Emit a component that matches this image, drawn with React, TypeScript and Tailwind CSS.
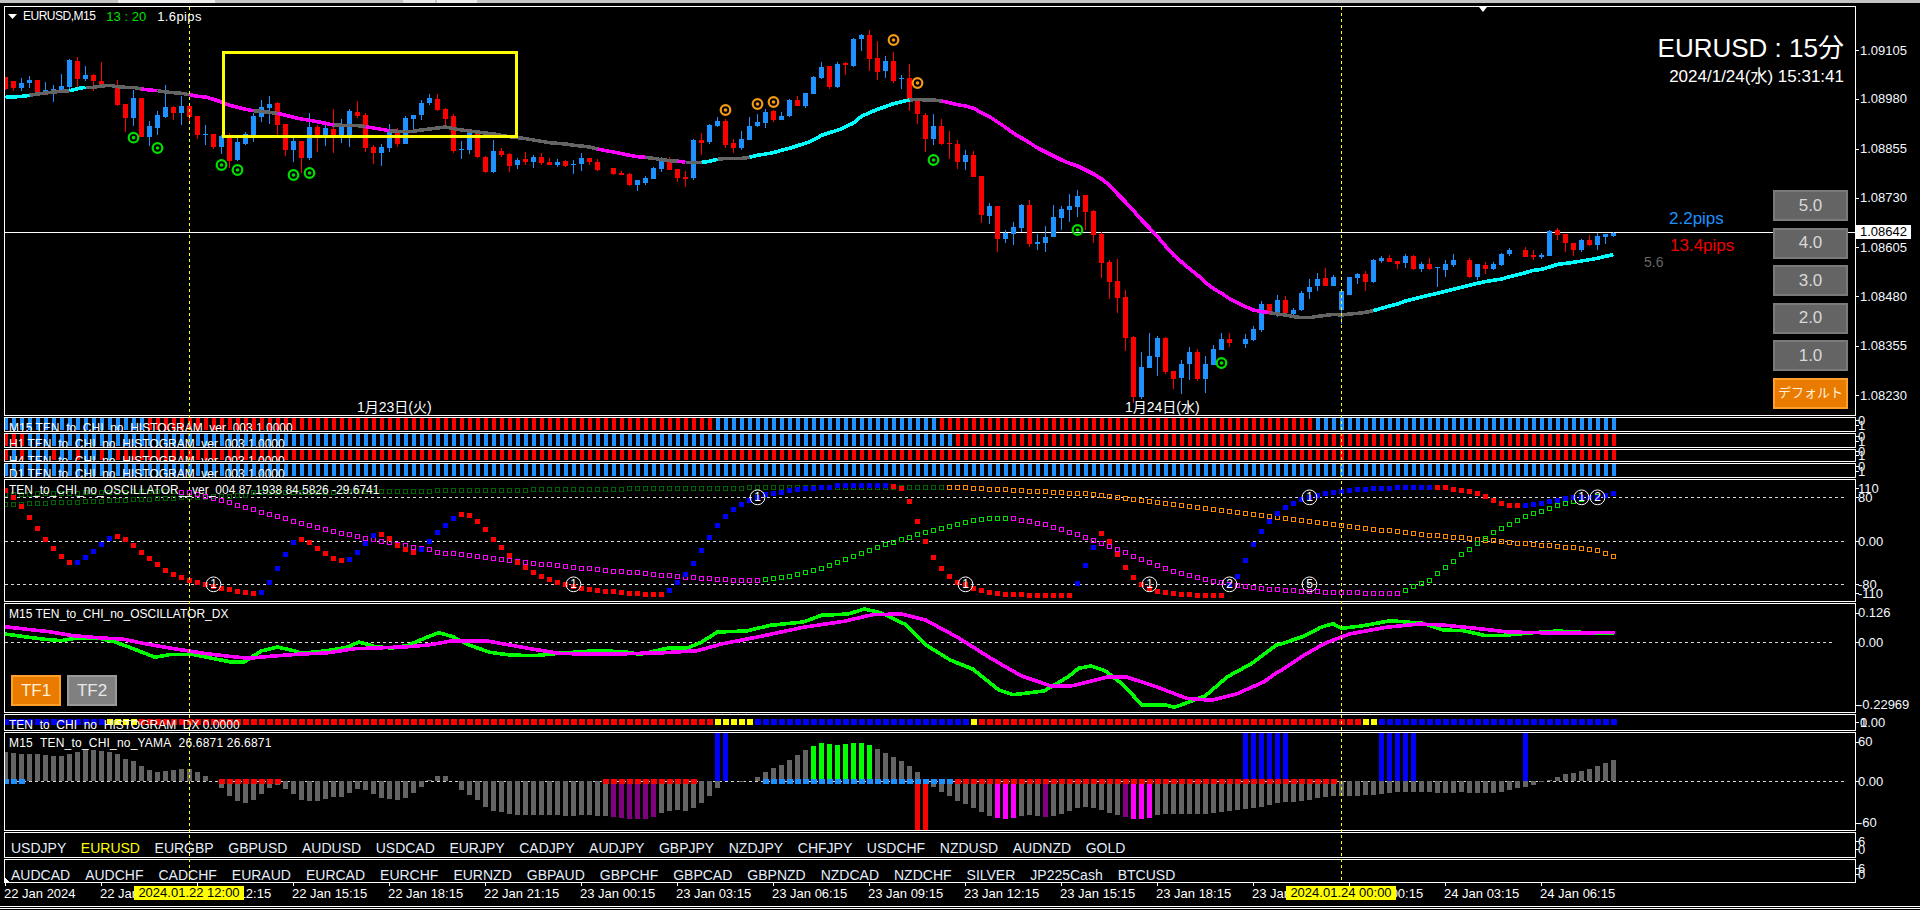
const RED = "#ff0000";
const DODGER = "#1e90ff";
const BLUE = "#0000ff";
const GRAY = "#646464";
const LIME = "#00ff00";
const MAGENTA = "#ff00ff";
const CYAN = "#00ffff";

const barX = (i: number) => 5.5 + 8 * i;

// candle rows: colour (0 red, 1 blue), wick top, body top, body bottom, wick bottom, all in 1/3 px
const candles: (number[] | null)[] = [
  [0,230,232,268,270],[0,243,243,263,272],[1,235,249,265,272],[1,228,240,249,265],[0,240,240,276,276],
  [1,247,270,280,285],[1,255,267,280,305],[1,222,258,272,278],[1,178,180,262,270],[0,172,183,238,262],
  [1,197,225,238,242],[0,222,225,243,272],[0,185,243,258,258],[1,252,255,258,262],[0,240,255,316,318],
  [0,312,312,354,395],[1,270,294,354,378],[0,294,294,410,412],[1,362,378,410,437],[1,333,345,384,405],
  [1,255,321,351,354],[0,318,321,339,360],[1,288,318,339,375],[0,315,318,351,372],[0,348,348,406,418],
  [1,375,402,406,436],[0,402,402,441,447],[1,405,408,441,462],[0,400,411,483,505],[1,415,426,480,484],
  [1,396,402,432,435],[1,338,348,405,426],[1,300,321,351,366],[1,288,312,324,372],[0,306,309,375,405],
  [0,372,372,450,468],[1,410,423,450,485],[0,423,423,474,520],[1,340,381,474,480],[0,375,381,405,455],
  [1,375,384,405,438],[0,327,387,405,458],[1,357,375,405,430],[1,327,333,405,440],[0,303,336,348,355],
  [0,340,345,444,456],[0,435,441,459,492],[1,432,441,459,498],[1,372,390,444,456],[0,384,396,432,442],
  [1,348,354,432,432],[1,345,345,357,390],[1,300,309,345,360],[1,282,294,309,315],[0,282,297,330,332],
  [0,324,327,357,378],[0,342,348,453,458],[1,423,447,450,477],[1,395,399,450,462],[0,390,402,471,475],
  [0,468,471,516,520],[1,420,453,516,519],[0,445,453,465,470],[0,460,462,498,515],[1,475,480,495,507],
  [0,456,477,486,495],[1,465,471,486,505],[0,460,471,489,495],[0,475,486,495,495],[1,477,486,495,502],
  [0,480,483,498,502],[1,480,492,495,522],[1,460,474,492,513],[0,474,474,486,495],[0,478,486,510,513],
  null,[0,504,504,522,525],[0,513,520,524,524],[0,520,522,555,558],[1,540,540,555,572],
  [1,528,534,549,556],[1,500,504,537,537],[1,471,474,507,516],[0,472,480,510,510],[0,507,507,534,546],
  [0,513,531,537,561],[1,418,420,534,540],[0,400,420,429,465],[1,372,375,426,432],[1,351,363,378,382],
  [0,357,363,435,444],[0,418,429,444,459],[1,393,417,444,450],[1,351,378,420,420],[1,342,366,378,380],
  [1,327,336,369,384],[0,330,333,360,366],[1,336,348,360,360],[1,297,300,348,351],[0,288,300,318,318],
  [1,279,279,318,324],[1,228,231,282,282],[1,186,201,234,237],[0,198,198,261,267],[1,186,192,261,264],
  [0,186,189,195,225],[1,114,117,198,201],[1,102,105,117,153],[0,90,105,177,213],[0,123,174,216,240],
  [1,168,183,213,234],[0,156,183,243,249],[1,225,234,237,267],[0,192,234,297,333],[0,300,303,342,372],
  [0,339,345,417,456],[1,342,378,417,435],[0,357,378,432,435],[0,393,429,432,477],[0,420,432,486,507],
  [1,450,465,486,510],[0,453,465,531,531],[0,528,528,645,669],[1,609,618,648,672],[0,618,618,717,756],
  [1,690,699,717,729],[1,666,681,702,735],[1,612,615,684,696],[0,600,615,732,741],[1,702,726,732,750],
  [1,678,711,729,756],[1,615,651,711,711],[1,618,627,654,690],[1,582,618,630,666],[1,570,588,621,651],
  [0,585,585,636,690],[0,630,633,705,729],[0,696,702,789,834],[0,780,786,846,897],[0,777,843,894,939],
  [0,870,891,1014,1053],[0,1008,1011,1191,1209],[1,1056,1101,1191,1197],[1,999,1068,1104,1104],[1,1008,1014,1071,1128],
  [0,1012,1014,1116,1122],[0,1113,1113,1137,1167],[1,1080,1092,1134,1182],[1,1041,1056,1092,1140],[0,1047,1056,1137,1143],
  [1,1068,1092,1137,1179],[1,1035,1047,1095,1095],[1,999,1017,1050,1050],[0,999,1017,1029,1041],null,
  [1,1002,1017,1032,1044],[1,978,987,1020,1023],[1,903,912,990,996],[0,912,912,939,945],[1,885,900,939,950],
  [0,888,900,939,940],[1,924,930,942,945],[1,873,879,930,933],[1,837,861,876,897],[1,819,837,858,873],
  [0,804,834,858,858],[1,825,831,858,858],[1,870,873,930,972],[1,831,831,885,885],[1,819,822,834,852],
  [0,813,822,846,873],[1,777,780,846,849],[1,768,774,783,789],[0,765,774,786,786],[0,783,783,792,807],
  [1,762,768,789,804],[0,765,768,807,810],[1,786,792,807,816],[0,774,792,807,810],[1,801,801,804,861],
  [1,780,792,810,831],[1,762,780,795,801],null,[0,774,780,831,834],[1,792,792,831,840],
  [0,786,795,807,822],[1,786,792,807,810],[1,759,762,795,798],[1,744,750,762,768],null,
  [0,741,750,771,771],[0,750,765,771,780],[1,759,765,771,777],[1,690,693,768,768],[0,684,690,705,720],
  [0,702,702,729,756],[0,729,729,750,768],[1,717,720,750,756],[0,705,720,735,738],[1,699,708,735,750],
  [1,702,702,711,732],[1,696,699,708,711],
];

const maY = [
  292,291,289,286,282,279,276,274,272,266,262,262,258,256,260,262,262,267,270,272,
  276,278,280,284,289,291,298,306,316,322,328,332,334,337,340,346,352,357,361,365,
  370,375,376,377,377,380,384,388,392,394,394,394,390,387,384,381,386,390,393,396,
  399,402,406,410,413,416,420,424,428,430,432,436,438,441,447,452,456,461,466,470,
  472,475,479,482,483,487,487,487,484,478,475,475,475,472,466,462,458,451,445,437,
  430,420,406,398,391,381,369,349,338,328,320,311,305,300,298,300,300,303,308,314,
  318,325,338,350,366,382,400,414,428,444,456,468,480,490,498,510,522,537,556,582,
  606,632,660,684,710,738,765,786,806,825,848,866,880,896,908,920,930,935,938,942,
  945,950,953,953,949,946,943,945,942,940,937,932,925,918,912,903,897,891,885,880,
  874,868,862,856,850,845,841,837,830,824,818,811,808,801,793,790,787,783,779,775,769,764,
];
// [from, to, colour] along the moving average
const maColors: [number, number, string][] = [
  [0,3,CYAN],[3,8,GRAY],[8,10,CYAN],[10,17,GRAY],[17,19,MAGENTA],[19,23,GRAY],[23,31,MAGENTA],[31,34,GRAY],
  [34,41,MAGENTA],[41,45,GRAY],[45,48,MAGENTA],[48,74,GRAY],[74,80,MAGENTA],[80,84,GRAY],[84,85,MAGENTA],
  [85,87,GRAY],[87,89,CYAN],[89,93,GRAY],[93,113,CYAN],[113,117,GRAY],[117,158,MAGENTA],[158,171,GRAY],[171,201,CYAN],
];

const greenMarks = [[16,413],[19,444],[27,495],[29,510],[36,525],[38,519],[116,480],[134,690],[152,1089]];
const orangeMarks = [[90,330],[94,312],[96,306],[111,120],[114,249]];

const oscMain = [
  242,262,288,322,355,388,415,439,457,457,442,424,403,385,379,388,406,427,445,463,
  481,493,503,511,518,523,530,536,538,544,547,550,547,517,475,433,397,388,397,415,
  430,445,451,448,427,400,376,373,385,406,418,427,418,394,367,346,325,313,316,334,
  358,388,412,436,457,472,487,499,508,517,522,528,534,538,541,544,544,547,550,550,
  553,553,553,541,517,493,460,421,382,346,319,298,283,270,262,253,250,246,242,238,
  235,234,232,232,226,226,226,226,226,226,226,228,235,274,334,394,442,475,499,517,
  523,535,541,547,550,553,553,553,556,556,556,556,556,556,520,466,412,370,394,433,
  472,502,523,535,544,547,550,553,553,556,556,556,556,525,499,451,403,364,334,310,
  292,280,268,262,256,250,247,244,241,238,238,235,235,235,232,232,232,232,232,232,
  232,238,241,244,250,259,271,280,286,286,286,283,280,274,271,265,262,262,262,262,256,250,
];
const oscMainRed = [[0,8],[14,31],[37,42],[47,51],[57,82],[111,133],[137,152],[179,189]];

const oscFast = [
  255,255,254,254,253,253,252,252,251,251,250,250,249,249,248,248,247,247,246,246,245,245,
  248,250,255,262,268,274,280,289,295,301,310,316,322,328,337,343,349,355,361,367,373,376,382,388,
  391,397,400,406,409,415,418,421,428,431,433,436,439,442,445,448,451,454,457,460,463,466,466,469,
  472,475,478,478,481,484,487,487,490,490,493,496,499,499,502,505,505,508,508,511,511,514,514,514,514,
  511,508,505,502,496,490,484,478,469,460,451,442,433,424,415,406,400,391,385,376,370,364,358,352,346,340,334,331,328,328,328,
  328,334,337,343,346,355,361,370,376,385,394,403,412,421,430,442,451,460,469,478,487,493,499,505,511,517,520,526,529,532,535,538,541,541,
  544,544,547,547,547,550,550,550,550,550,553,553,553,553,553,
  544,532,523,514,493,475,457,436,421,403,388,370,358,346,334,322,313,307,298,289,283,277,271,265,262,259,253,
];
const oscFastColor = (i: number) =>
  i <= 21 ? "#006400" : (i >= 95 && i <= 125) || i >= 175 ? "#00e000" : MAGENTA;

const slowAnchors = [[0,286],[30,258],[31,250],[80,238],[95,235],[120,235],[135,253],[159,325],[175,370],[190,403],[196,415],[199,424],[201,442]];
const oscSlow = Array.from({ length: 202 }, (_, i) => {
  const k = slowAnchors.findIndex((a) => a[0] >= i);
  if (k <= 0) return slowAnchors[0][1];
  const [x0, y0] = slowAnchors[k - 1];
  const [x1, y1] = slowAnchors[k];
  return y0 + ((y1 - y0) * (i - x0)) / (x1 - x0);
});

const numbered = [[26,523,"1"],[71,523,"1"],[94,262,"1"],[120,523,"1"],[143,523,"1"],[153,523,"2"],[163,262,"1"],[163,523,"5"],[197,262,"1"],[199,262,"2"]] as [number, number, string][];

// line anchors read off in strips: [strip start x, ...[x, y] pairs]
const dxStrips = (strips: [number, number[]][]) =>
  strips
    .flatMap(([base, p]) => {
      const out: string[] = [];
      for (let k = 0; k < p.length; k += 2) out.push(`${(base + p[k] * 0.408).toFixed(1)},${(410 + p[k + 1] / 3).toFixed(1)}`);
      return out;
    })
    .join(" ");

const dxGreen = dxStrips([
  [0, [12,672,60,680,110,688,150,692,190,684,240,684,280,695,320,713,380,742,420,733,470,733,520,745,570,757,600,755,640,723,680,711,720,722,740,730,800,722,850,712,880,696,920,710,960,714,1000,706,1040,685,1075,668,1110,680,1150,705,1200,727,1250,735,1310,737,1370,730,1460,722,1530,725]],
  [640, [0,733,40,722,70,714,115,715,150,697,190,666,260,663,320,646,400,636,445,616,510,612,550,597,590,608,650,643,700,704,760,750,815,777,880,840,915,854,990,843,1050,800,1075,775,1105,768,1140,782,1185,825,1230,885,1290,886,1310,892,1385,858,1440,800,1500,760,1560,705]],
  [1280, [0,703,60,678,100,652,130,641,150,655,200,648,270,632,350,640,400,660,450,662,500,676,550,676,620,668,680,663,780,670,820,668]],
]);
const dxMagenta = dxStrips([
  [0, [12,650,60,657,120,665,180,677,250,684,300,687,350,700,420,715,500,730,560,739,610,745,670,738,740,732,800,729,870,716,920,714,1000,710,1050,705,1110,692,1190,692,1250,705,1300,716,1370,730,1450,733,1540,731]],
  [640, [0,730,60,728,140,722,200,702,300,678,400,652,500,634,570,614,640,612,700,630,780,683,860,745,935,798,1010,829,1060,827,1150,800,1190,800,1260,828,1340,865,1400,871,1460,853,1530,815,1560,788]],
  [1280, [0,783,60,735,110,700,170,672,260,652,340,642,400,645,480,655,560,666,700,670,820,667]],
]);

const yamaY = [
  96,98,102,102,102,105,108,108,102,96,90,90,93,96,102,117,123,138,150,156,
  153,150,147,147,156,168,184,204,228,243,249,240,222,204,195,207,222,240,243,243,
  237,231,231,219,207,210,222,234,237,240,234,219,201,180,168,168,184,210,225,240,
  261,273,276,282,285,285,285,285,285,285,288,288,285,285,288,288,291,294,297,297,
  297,291,279,273,270,273,264,249,228,204,184,184,186,182,171,156,144,135,120,105,
  90,78,69,72,75,72,69,69,75,87,99,111,123,138,156,184,201,216,228,243,
  252,264,276,288,294,297,294,288,285,288,291,288,282,273,264,261,264,270,279,285,
  291,297,297,294,285,282,282,282,282,282,282,279,276,273,270,267,264,261,255,249,
  246,246,243,240,234,231,228,228,228,228,225,225,222,219,216,216,216,216,216,219,
  219,219,216,219,219,219,219,216,210,204,201,195,186,180,171,162,159,153,147,138,129,120,
];
const yamaColor = (i: number) => {
  if (i >= 101 && i <= 108) return LIME;
  if ((i >= 124 && i <= 126) || (i >= 141 && i <= 143)) return MAGENTA;
  if ((i >= 76 && i <= 81) || i === 130 || i === 140) return "#800080";
  return GRAY;
};
const yamaBlueBars = [89,90,155,156,157,158,159,160,172,173,174,175,176,190];
const yamaZero = (i: number) => {
  if (i <= 2 || (i >= 95 && i <= 118)) return DODGER;
  if ((i >= 27 && i <= 34) || (i >= 75 && i <= 86) || (i >= 119 && i <= 166)) return RED;
  return null;
};

const h4Blue = [1,3,4,5,7,8,10,11,13];
const histRows: { top: number; h: number; color: (i: number) => string }[] = [
  { top: 418, h: 12, color: (i) => (i <= 17 || (i >= 89 && i <= 116) || i >= 164 ? DODGER : RED) },
  { top: 434, h: 12, color: (i) => (i <= 2 || i >= 119 ? RED : DODGER) },
  { top: 450, h: 10, color: (i) => (h4Blue.includes(i) ? DODGER : RED) },
  { top: 464, h: 12, color: () => DODGER },
];

const dxHist = (i: number) => {
  if ((i >= 13 && i <= 16) || (i >= 89 && i <= 93) || i === 121 || i === 170 || i === 171) return "#ffff00";
  if (i <= 12 || (i >= 94 && i <= 120) || i >= 172) return BLUE;
  return RED;
};

const symbolsTop = ["USDJPY","EURUSD","EURGBP","GBPUSD","AUDUSD","USDCAD","EURJPY","CADJPY","AUDJPY","GBPJPY","NZDJPY","CHFJPY","USDCHF","NZDUSD","AUDNZD","GOLD"];
const symbolsBottom = ["AUDCAD","AUDCHF","CADCHF","EURAUD","EURCAD","EURCHF","EURNZD","GBPAUD","GBPCHF","GBPCAD","GBPNZD","NZDCAD","NZDCHF","SILVER","JP225Cash","BTCUSD"];
const times = ["22 Jan 2024","22 Jan 09:15","22 Jan 12:15","22 Jan 15:15","22 Jan 18:15","22 Jan 21:15","23 Jan 00:15","23 Jan 03:15","23 Jan 06:15","23 Jan 09:15","23 Jan 12:15","23 Jan 15:15","23 Jan 18:15","23 Jan 21:15","24 Jan 00:15","24 Jan 03:15","24 Jan 06:15"];
const sizeButtons = ["5.0","4.0","3.0","2.0","1.0"];

function Axis({ top, h, labels, x = 1858 }: { top: number; h: number; labels: [number, string][]; x?: number }) {
  return (
    <svg className="shrink-0 overflow-visible" width={64} height={h} viewBox={`1856 ${top} 64 ${h}`}>
      {labels.map(([y, text], k) => (
        <g key={k}>
          <rect x={1856} y={Math.round(y)} width={3} height={1} fill="#fff" />
          <text x={x} y={y + 4.5} fontSize={13} fill="#f4f8ff">{text}</text>
        </g>
      ))}
    </svg>
  );
}

function Pane({ className, top, h, labels, axisX, children }: { className: string; top: number; h: number; labels: [number, string][]; axisX?: number; children: React.ReactNode }) {
  return (
    <div className={`flex ${className}`}>
      <div className="relative w-[1852px] shrink-0 overflow-hidden border border-white">{children}</div>
      <Axis top={top} h={h} labels={labels} x={axisX} />
    </div>
  );
}

// plot area drawn in page coordinates
function Plot({ top, h, children }: { top: number; h: number; children: React.ReactNode }) {
  return (
    <svg className="absolute left-0 top-0" width={1850} height={h - 2} viewBox={`5 ${top + 1} 1850 ${h - 2}`} shapeRendering="crispEdges">
      {children}
    </svg>
  );
}

function Dashed({ y, to = 1844 }: { y: number; to?: number }) {
  return <line x1={5} x2={to} y1={y + 0.5} y2={y + 0.5} stroke="#d8d8d8" strokeDasharray="3 3" />;
}

function PaneTitle({ className, children }: { className: string; children: React.ReactNode }) {
  return <div className={`absolute left-[4px] whitespace-nowrap text-[12px] leading-[15px] text-white ${className}`}>{children}</div>;
}

function SizeButton({ label }: { label: string }) {
  return (
    <div className="flex h-[31px] items-center justify-center border-2 border-[#7a7a7a] bg-[#646464] text-[17px] text-[#d8d8d8]">{label}</div>
  );
}

export default function App() {
  return (
    <div className="relative h-[910px] w-full overflow-hidden bg-black font-['Liberation_Sans','Noto_Sans_CJK_JP',sans-serif]">
      {/* terminal toolbar edge */}
      <div className="flex h-[3px] bg-[#c4c4c4]">
        <div className="ml-[118px] w-[97px] bg-[#ececec]" />
        <div className="ml-[2px] w-[186px] bg-[#c4c4c4]" />
        <div className="w-[32px] bg-[#e6e6e6]" />
        <div className="ml-[2px] w-[40px] bg-[#ececec]" />
      </div>

      <div className="flex flex-col gap-px pl-[4px] pt-[3px]">
        {/* main chart */}
        <Pane className="h-[410px]" top={6} h={410} axisX={1860} labels={[[50,"1.09105"],[98.7,"1.08980"],[148.7,"1.08855"],[197.7,"1.08730"],[247,"1.08605"],[296,"1.08480"],[345.7,"1.08355"],[395,"1.08230"]]}>
          <Plot top={6} h={410}>
            <rect x={5} y={232} width={1850} height={1} fill="#fff" />
            {candles.map((c, i) => {
              if (!c) return null;
              const fill = c[0] ? DODGER : RED;
              return (
                <g key={i} fill={fill}>
                  <rect x={5 + 8 * i} y={c[1] / 3} width={1} height={(c[4] - c[1]) / 3} />
                  <rect x={3 + 8 * i} y={c[2] / 3} width={5} height={Math.max(1, (c[3] - c[2]) / 3)} />
                </g>
              );
            })}
            {maColors.map(([a, b, color], k) => (
              <polyline
                key={k}
                fill="none"
                stroke={color}
                strokeWidth={3.6}
                points={maY.slice(a, b + 1).map((y, n) => `${barX(a + n)},${y / 3}`).join(" ")}
              />
            ))}
            <rect x={223.5} y={52} width={293} height={84} fill="none" stroke="#ffff00" strokeWidth={3} />
            <g shapeRendering="auto">
              {greenMarks.map(([i, y]) => (
                <g key={`g${i}`}>
                  <circle cx={barX(i)} cy={y / 3} r={4.8} fill="none" stroke="#00e000" strokeWidth={2.2} />
                  <circle cx={barX(i)} cy={y / 3} r={1.8} fill="#00e000" />
                </g>
              ))}
              {orangeMarks.map(([i, y]) => (
                <g key={`o${i}`}>
                  <circle cx={barX(i)} cy={y / 3} r={4.8} fill="none" stroke="#f59a12" strokeWidth={2.2} />
                  <circle cx={barX(i)} cy={y / 3} r={1.8} fill="#f59a12" />
                </g>
              ))}
              <polygon points="8,14 17,14 12.5,19" fill="#fff" />
              <polygon points="1479,7 1487,7 1483,12" fill="#fff" />
            </g>
          </Plot>
          <div className="absolute left-[18px] top-[2px] flex gap-[11px] whitespace-nowrap text-[13px] leading-[15px] text-white">
            <span className="text-[12px] tracking-[-0.5px]">EURUSD,M15</span>
            <span className="text-[#00e000]">13 : 20</span>
            <span className="tracking-[0.4px]">1.6pips</span>
          </div>
          <div className="absolute right-[11px] top-[25px] flex flex-col items-end whitespace-nowrap text-white">
            <div className="text-[26px] leading-[32px]">EURUSD : 15分</div>
            <div className="mt-[4px] text-[17px] leading-[18px]">2024/1/24(水) 15:31:41</div>
          </div>
          <div className="absolute left-[1664px] top-[202px] text-[17px] leading-[20px] text-[#1e90ff]">2.2pips</div>
          <div className="absolute left-[1665px] top-[229px] text-[17px] leading-[20px] text-[#f00000]">13.4pips</div>
          <div className="absolute left-[1639px] top-[247px] text-[14px] leading-[16px] text-[#666666]">5.6</div>
          <div className="absolute left-[352px] top-[392px] text-[14px] leading-[16px] text-white">1月23日(火)</div>
          <div className="absolute left-[1120px] top-[392px] text-[14px] leading-[16px] text-white">1月24日(水)</div>
          <div className="absolute left-[1768px] top-[183px] flex w-[75px] flex-col gap-[6.5px]">
            {sizeButtons.map((b) => (
              <SizeButton key={b} label={b} />
            ))}
            <div className="flex h-[31px] items-center justify-center border-2 border-[#ffa02a] bg-[#e97b00] text-[13px] text-[#fff0dc]">デフォルト</div>
          </div>
        </Pane>

        {/* timeframe histograms */}
        {[
          { cls: "h-[15px]", title: "M15 TEN_to_CHI_no_HISTOGRAM_ver_003 1.0000", pos: "top-[3px]", labels: [[420,"0"],[425,"1"]] },
          { cls: "h-[15px]", title: "H1 TEN_to_CHI_no_HISTOGRAM_ver_003 1.0000", pos: "top-[3px]", labels: [[436,"0"],[441,"1"]] },
          { cls: "h-[13px]", title: "H4 TEN_to_CHI_no_HISTOGRAM_ver_003 1.0000", pos: "top-[4px]", labels: [[451,"0"],[455,"1"]] },
          { cls: "h-[15px]", title: "D1 TEN_to_CHI_no_HISTOGRAM_ver_003 1.0000", pos: "top-[3px]", labels: [[466,"0"],[471,"1"]] },
        ].map((row, r) => {
          const info = histRows[r];
          const h = r === 2 ? 13 : 15;
          return (
            <Pane key={row.title} className={row.cls} top={info.top - 1} h={h} labels={row.labels as [number, string][]}>
              <Plot top={info.top - 1} h={h}>
                {Array.from({ length: 202 }, (_, i) => (
                  <rect key={i} x={4 + 8 * i} y={info.top} width={4} height={info.h} fill={info.color(i)} />
                ))}
              </Plot>
              <PaneTitle className={row.pos}>{row.title}</PaneTitle>
            </Pane>
          );
        })}

        {/* oscillator */}
        <Pane className="h-[123px]" top={479} h={123} labels={[[488,"110"],[497,"80"],[541,"0.00"],[584,"-80"],[593,"-110"]]}>
          <Plot top={479} h={123}>
            <Dashed y={497} />
            <Dashed y={541} />
            <Dashed y={584} />
            {oscSlow.map((y, i) => (
              <rect key={`s${i}`} x={3.5 + 8 * i} y={Math.round(410 + y / 3 - 2) - 0.5} width={4} height={4} fill="none" stroke={i <= 117 ? "#006400" : "#ff8c00"} />
            ))}
            {oscFast.map((y, i) => (
              <rect key={`f${i}`} x={3.5 + 8 * i} y={Math.round(410 + y / 3 - 2) - 0.5} width={4} height={4} fill="none" stroke={oscFastColor(i)} />
            ))}
            {oscMain.map((y, i) => (
              <rect
                key={`m${i}`}
                x={3 + 8 * i}
                y={Math.round(410 + y / 3 - 2.5)}
                width={5}
                height={5}
                fill={oscMainRed.some(([a, b]) => i >= a && i <= b) ? RED : BLUE}
              />
            ))}
            <g shapeRendering="auto">
              {numbered.map(([i, y, n], k) => (
                <g key={k}>
                  <circle cx={barX(i)} cy={410 + y / 3} r={7.4} fill="none" stroke="#fff" />
                  <text x={barX(i)} y={410 + y / 3 + 4} textAnchor="middle" fontSize={12} fill="#fff">{n}</text>
                </g>
              ))}
            </g>
          </Plot>
          <PaneTitle className="top-[3px]">TEN_to_CHI_no_OSCILLATOR__ver_004 87.1938 84.5826 -29.6741</PaneTitle>
        </Pane>

        {/* oscillator DX */}
        <Pane className="h-[110px]" top={603} h={110} labels={[[612.5,"0.126"],[642,"0.00"],[704.5,"-0.22969"]]}>
          <Plot top={603} h={110}>
            <Dashed y={642} to={1833} />
            <polyline fill="none" stroke={LIME} strokeWidth={3.6} points={dxGreen} />
            <polyline fill="none" stroke={MAGENTA} strokeWidth={3.6} points={dxMagenta} />
          </Plot>
          <PaneTitle className="top-[3px]">M15 TEN_to_CHI_no_OSCILLATOR_DX</PaneTitle>
          <div className="absolute left-[6px] top-[71px] flex gap-[6px]">
            <div className="flex h-[31px] w-[50px] items-center justify-center border-2 border-[#ffa02a] bg-[#e97b00] text-[17px] text-[#fff0dc]">TF1</div>
            <div className="flex h-[31px] w-[50px] items-center justify-center border-2 border-[#9a9a9a] bg-[#808080] text-[17px] text-[#e8e8e8]">TF2</div>
          </div>
        </Pane>

        {/* DX histogram */}
        <Pane className="h-[17px]" top={714} h={17} labels={[[722,"0"],[722,"1.00"]]} axisX={1860}>
          <Plot top={714} h={17}>
            {Array.from({ length: 202 }, (_, i) => (
              <rect key={i} x={3 + 8 * i} y={719} width={6} height={6} fill={dxHist(i)} />
            ))}
          </Plot>
          <PaneTitle className="top-[3px]">TEN_to_CHI_no_HISTOGRAM_DX 0.0000</PaneTitle>
        </Pane>

        {/* yama */}
        <Pane className="h-[99px]" top={732} h={99} labels={[[741.5,"60"],[781,"0.00"],[822.5,"-60"]]}>
          <Plot top={732} h={99}>
            <Dashed y={781} />
            {yamaY.map((y, i) => {
              const real = 720 + y / 3;
              return (
                <rect key={i} x={3 + 8 * i} y={Math.min(real, 781)} width={5} height={Math.abs(real - 781)} fill={yamaColor(i)} />
              );
            })}
            {yamaBlueBars.map((i) => (
              <rect key={`b${i}`} x={3 + 8 * i} y={733} width={5} height={48} fill={BLUE} />
            ))}
            <rect x={3 + 8 * 114} y={781} width={5} height={49} fill={RED} />
            <rect x={3 + 8 * 115} y={781} width={5} height={49} fill={RED} />
            {yamaY.map((_, i) => {
              const color = yamaZero(i);
              return color ? <rect key={`z${i}`} x={3 + 8 * i} y={779} width={6} height={5} fill={color} /> : null;
            })}
          </Plot>
          <PaneTitle className="top-[3px] tracking-[0.2px]">{"M15\u00a0\u00a0TEN_to_CHI_no_YAMA\u00a0\u00a026.6871 26.6871"}</PaneTitle>
        </Pane>

        {/* symbol rows */}
        <Pane className="h-[26px]" top={832} h={26} labels={[[841,"6"],[849,"0"]]}>
          <div className="flex gap-[14.6px] pl-[6px] pt-[7px] text-[14px] leading-[17px] text-[#e4eefc]">
            {symbolsTop.map((s) => (
              <span key={s} className={s === "EURUSD" ? "text-[#ffff00]" : ""}>{s}</span>
            ))}
          </div>
        </Pane>
        <Pane className="h-[24px]" top={859} h={24} labels={[[868,"6"],[874,"0"]]}>
          <div className="flex gap-[15px] pl-[6px] pt-[7px] text-[14px] leading-[17px] text-[#e4eefc]">
            {symbolsBottom.map((s) => (
              <span key={s}>{s}</span>
            ))}
          </div>
        </Pane>
      </div>

      {/* time axis */}
      <div className="flex h-[23px] pl-[4px] text-[13px] leading-[15px] text-white">
        {times.map((t) => (
          <div key={t} className="w-[96px] shrink-0 whitespace-nowrap">
            <div className="ml-[1px] h-[3px] w-px bg-white" />
            <div>{t}</div>
          </div>
        ))}
      </div>
      <div className="h-px bg-white" />
      <div className="mt-px h-px bg-white" />

      {/* overlays: crosshair, price tag, time tags */}
      <svg className="pointer-events-none absolute left-0 top-0" width={1920} height={910} shapeRendering="crispEdges">
        <line x1={189.5} x2={189.5} y1={7} y2={882} stroke="#ffff00" strokeDasharray="3 3" />
        <line x1={1341.5} x2={1341.5} y1={7} y2={882} stroke="#ffff00" strokeDasharray="3 3" />
        <polygon points="4,877 4,883 10,883" fill="#fff" />
      </svg>
      <div className="absolute left-[1856px] top-[225px] flex h-[14px] w-[55px] items-center justify-center bg-white text-[13px] text-black">1.08642</div>
      <div className="absolute left-[134px] top-[886px] flex h-[14px] w-[110px] items-center justify-center bg-[#ffff00] text-[13px] text-black">2024.01.22 12:00</div>
      <div className="absolute left-[1286px] top-[886px] flex h-[14px] w-[110px] items-center justify-center bg-[#ffff00] text-[13px] text-black">2024.01.24 00:00</div>
    </div>
  );
}
